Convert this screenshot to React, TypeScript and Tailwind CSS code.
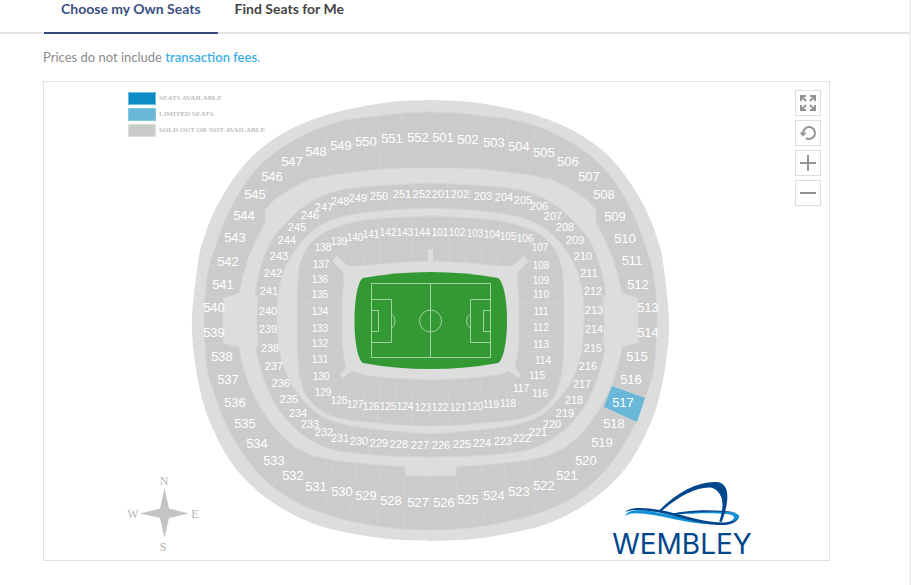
import React, { useState } from 'react';

type Point = [number, number];
type Label = [number, number, number];

const CENTER_X = 430.5;

// Left half of every ring, from top center down to bottom center
const STADIUM: Point[] = [
  [430, 100], [390, 102], [350, 109], [320, 117], [291, 129], [264, 146], [245, 164], [228, 187], [213, 214],
  [204, 238], [198, 262], [192, 320], [195, 362], [203, 402], [213, 429], [227, 456], [243, 477], [265, 497],
  [292, 514], [320, 526], [350, 533], [388, 539], [430, 541],
];

const UPPER_OUTER: Point[] = [
  [430, 112], [403, 113], [378, 116], [352, 119], [325, 126], [298, 138], [273, 154], [253, 173], [238, 195],
  [225, 220], [216, 245], [209, 267], [205, 293], [204, 320], [205, 347], [208, 373], [216, 398], [225, 422],
  [238, 446], [253, 467], [273, 487], [298, 503], [325, 514], [350, 521], [377, 526], [403, 529], [430, 530],
];

const UPPER_INNER: Point[] = [
  [430, 168], [403, 168], [380, 169], [355, 172], [332, 175], [310, 179], [292, 188], [275, 199], [265, 210],
  [265, 223], [257, 238], [249, 256], [243, 275], [239, 293], [223, 298], [223, 343], [239, 347], [242, 363],
  [249, 385], [260, 407], [273, 426], [283, 437], [295, 447], [313, 456], [333, 460], [357, 463], [380, 465],
  [405, 467], [405, 476], [430, 476],
];

const CLUB_OUTER: Point[] = [
  [430, 183], [390, 185], [353, 188], [327, 194], [303, 207], [287, 222], [273, 238], [264, 257], [258, 278],
  [255, 295], [258, 297], [257, 320], [258, 345], [256, 347], [260, 367], [267, 387], [273, 400], [285, 418],
  [303, 435], [327, 448], [353, 453], [390, 456], [430, 457],
];

const CLUB_INNER: Point[] = [
  [430, 208], [390, 210], [350, 215], [325, 223], [307, 236], [292, 255], [283, 273], [278, 297], [277, 320],
  [279, 349], [285, 371], [293, 387], [307, 404], [323, 417], [347, 425], [373, 429], [403, 432], [430, 434],
];

const LOWER_OUTER: Point[] = [
  [430, 216], [390, 218], [360, 221], [337, 227], [322, 234], [310, 244], [302, 258], [298, 277], [297, 320],
  [298, 363], [302, 384], [308, 398], [323, 412], [343, 419], [367, 422], [403, 425], [430, 426],
];

const LOWER_INNER: Point[] = [
  [428, 261], [390, 263], [360, 266], [348, 266], [337, 256], [332, 261], [343, 272], [344, 282], [342, 297],
  [342, 343], [344, 357], [346, 367], [340, 375], [343, 378], [352, 371], [363, 375], [390, 378], [430, 380],
];

// Section borders on the left half: x1, y1, x2, y2
const DIVIDERS: number[][] = [
  [430, 112, 430, 168], [403, 113, 403, 168], [378, 116, 380, 169], [352, 119, 355, 172], [325, 126, 332, 175],
  [298, 138, 310, 179], [273, 154, 292, 188], [253, 173, 275, 199], [238, 195, 264, 212], [225, 220, 257, 237],
  [216, 245, 249, 256], [209, 267, 243, 275], [205, 297, 223, 298], [204, 320, 223, 320], [205, 344, 223, 343],
  [208, 373, 242, 363], [216, 398, 249, 385], [225, 422, 260, 407], [238, 446, 272, 425], [253, 467, 283, 437],
  [273, 487, 295, 447], [298, 503, 313, 456], [325, 514, 333, 460], [350, 521, 357, 463], [377, 526, 380, 465],
  [403, 529, 405, 476], [430, 476, 430, 530],
  [413, 184, 413, 208], [391, 185, 391, 210], [367, 187, 369, 212], [348, 190, 352, 214], [327, 194, 335, 218],
  [310, 203, 320, 226], [296, 214, 309, 233], [281, 229, 298, 247], [271, 243, 290, 259], [263, 262, 284, 270],
  [258, 280, 280, 284], [257, 300, 278, 301], [257, 320, 277, 320], [258, 340, 278, 339], [259, 358, 281, 355],
  [264, 377, 287, 373], [271, 395, 296, 389], [281, 411, 305, 401], [294, 426, 313, 410], [313, 441, 326, 419],
  [332, 449, 341, 424], [350, 452, 354, 427], [368, 454, 371, 429], [389, 456, 391, 431], [409, 457, 410, 433],
  [430, 434, 430, 457],
  [412, 217, 412, 262], [395, 218, 395, 263], [378, 219, 380, 264], [361, 221, 364, 266], [343, 225, 352, 264],
  [325, 236, 337, 256], [302, 262, 332, 268], [298, 287, 343, 288], [297, 303, 342, 303], [297, 320, 342, 320],
  [297, 336, 342, 336], [298, 352, 343, 351], [299, 369, 344, 365], [311, 401, 340, 378], [330, 414, 351, 374],
  [346, 419, 360, 376], [362, 421, 366, 377], [378, 423, 381, 378], [395, 424, 396, 379], [412, 425, 413, 380],
  [430, 380, 430, 426],
];

const UPPER_LABELS: Label[] = [
  [501, 443, 137], [502, 468, 139], [503, 494, 142], [504, 519, 146], [505, 544, 152], [506, 568, 161],
  [507, 589, 176], [508, 604, 194], [509, 615, 216], [510, 625, 238], [511, 632, 260], [512, 638, 284],
  [513, 648, 307], [514, 648, 332], [515, 637, 356], [516, 631, 379], [517, 623, 402], [518, 614, 423],
  [519, 602, 442], [520, 586, 460], [521, 567, 475], [522, 544, 485], [523, 519, 491], [524, 494, 495],
  [525, 468, 499], [526, 444, 502], [527, 418, 502], [528, 391, 500], [529, 366, 495], [530, 342, 491],
  [531, 316, 486], [532, 293, 475], [533, 274, 460], [534, 257, 443], [535, 245, 423], [536, 235, 402],
  [537, 228, 379], [538, 222, 356], [539, 214, 332], [540, 214, 307], [541, 223, 284], [542, 228, 261],
  [543, 235, 237], [544, 244, 215], [545, 255, 194], [546, 272, 176], [547, 292, 161], [548, 316, 151],
  [549, 341, 145], [550, 366, 141], [551, 392, 138], [552, 418, 137],
];

const CLUB_LABELS: Label[] = [
  [201, 441, 194], [202, 460, 194], [203, 483, 196], [204, 504, 197], [205, 523, 200], [206, 539, 206],
  [207, 553, 216], [208, 565, 227], [209, 575, 240], [210, 583, 256], [211, 589, 273], [212, 593, 291],
  [213, 594, 310], [214, 594, 329], [215, 593, 348], [216, 588, 366], [217, 582, 384], [218, 574, 400],
  [219, 565, 413], [220, 552, 424], [221, 538, 432], [222, 522, 438], [223, 503, 441], [224, 482, 443],
  [225, 462, 444], [226, 441, 445], [227, 420, 445], [228, 399, 444], [229, 379, 443], [230, 359, 441],
  [231, 340, 438], [232, 324, 432], [233, 310, 424], [234, 298, 413], [235, 289, 399], [236, 281, 383],
  [237, 274, 366], [238, 270, 348], [239, 268, 329], [240, 268, 311], [241, 269, 291], [242, 273, 273],
  [243, 279, 256], [244, 287, 240], [245, 297, 227], [246, 310, 215], [247, 324, 207], [248, 340, 201],
  [249, 358, 198], [250, 379, 196], [251, 402, 194], [252, 422, 194],
];

const LOWER_LABELS: Label[] = [
  [101, 440, 232], [102, 457, 232], [103, 475, 233], [104, 492, 234], [105, 508, 236], [106, 525, 238],
  [107, 540, 247], [108, 541, 265], [109, 541, 280], [110, 541, 294], [111, 541, 311], [112, 541, 327],
  [113, 541, 344], [114, 543, 360], [115, 537, 375], [116, 540, 393], [117, 521, 388], [118, 508, 403],
  [119, 491, 404], [120, 475, 406], [121, 458, 407], [122, 440, 407], [123, 423, 407], [124, 405, 406],
  [125, 388, 406], [126, 371, 406], [127, 355, 404], [128, 339, 400], [129, 323, 392], [130, 321, 376],
  [131, 320, 359], [132, 320, 343], [133, 320, 328], [134, 320, 311], [135, 320, 294], [136, 320, 279],
  [137, 321, 264], [138, 323, 247], [139, 339, 241], [140, 355, 237], [141, 371, 234], [142, 388, 232],
  [143, 405, 232], [144, 422, 232],
];

const LEGEND = [
  { label: 'SEATS AVAILABLE', swatch: 'bg-[#0b8cc4] border-[#6dbbdc]' },
  { label: 'LIMITED SEATS', swatch: 'bg-[#69b8d9] border-[#85c6e0]' },
  { label: 'SOLD OUT OR NOT AVAILABLE', swatch: 'bg-[#cacaca] border-[#dcdcdc]' },
];

const mirror = (x: number) => 2 * CENTER_X - x;

const closeRing = (half: Point[]): Point[] => [
  ...half,
  ...half.map(([x, y]): Point => [mirror(x), y]).reverse(),
];

const toPoints = (half: Point[]) => closeRing(half).map((p) => p.join(',')).join(' ');

// Catmull-Rom through all points
const toSmoothPath = (half: Point[]) => {
  const pts = closeRing(half);
  const at = (i: number) => pts[(i + pts.length) % pts.length];
  const curves = pts.map((_, i) => {
    const [p0, p1, p2, p3] = [at(i - 1), at(i), at(i + 1), at(i + 2)];
    return `C${p1[0] + (p2[0] - p0[0]) / 6},${p1[1] + (p2[1] - p0[1]) / 6} ${p2[0] - (p3[0] - p1[0]) / 6},${
      p2[1] - (p3[1] - p1[1]) / 6
    } ${p2[0]},${p2[1]}`;
  });
  return `M${pts[0].join(',')}${curves.join('')}Z`;
};

const SectionLabels: React.FC<{ labels: Label[]; className: string; drop: number }> = ({ labels, className, drop }) => (
  <g className={className} fill="#fff" textAnchor="middle">
    {labels.map(([section, x, y]) => (
      <text key={section} x={x} y={y + drop}>
        {section}
      </text>
    ))}
  </g>
);

const Pitch: React.FC = () => (
  <g>
    <path
      d="M363 278Q395 272 430.500 272T498 278C503 281 507 298 507 320.500S503 360 498 363Q466 369 430.500 369T363 363C358 360 354.500 343 354.500 320.500S358 281 363 278Z"
      fill="#339933"
    />
    <g fill="none" stroke="#a3d0a3" strokeWidth="1">
      <rect x="371.500" y="283.500" width="119" height="74" />
      <path d="M430.500 283.500V357.500" />
      <circle cx="430.500" cy="321" r="11" />
      <path d="M371.500 299.500H391.500V342.500H371.500M371.500 310.500H378.500V331.500H371.500M391.500 314Q395 316 395 321T391.500 328" />
      <path d="M490.500 299.500H470.500V342.500H490.500M490.500 310.500H483.500V331.500H490.500M470.500 314Q466.500 316 466.500 321T470.500 328" />
    </g>
  </g>
);

const Compass: React.FC = () => (
  <g fill="#c4c4c4">
    <path d="M164.500 488L169 508.500L189 513.500L169 518L164.500 538L160 518L140 513.500L160 508.500Z" />
    <g className="font-[family-name:Liberation_Serif,serif] text-[12px]" fill="#b4b4b4" textAnchor="middle">
      <text x="164" y="485">N</text>
      <text x="133" y="518">W</text>
      <text x="195" y="518">E</text>
      <text x="163" y="551">S</text>
    </g>
  </g>
);

const WembleyLogo: React.FC = () => (
  <g>
    <g transform="translate(600 470) scale(.3333)">
      <path
        d="M76 138C84 116 122 120 160 125C225 135 290 158 352 161C290 168 230 147 165 136C120 129 92 126 76 138Z"
        fill="#1192d6"
      />
      <path
        d="M225 130C280 122 345 123 385 126C430 130 428 148 385 157C408 146 410 136 380 132C335 128 280 130 225 134Z"
        fill="#1192d6"
      />
      <path d="M215 131C265 120 345 116 412 128C345 122 270 126 215 135Z" fill="#00468c" />
      <path
        d="M75 126C92 109 135 113 180 120C240 132 300 153 350 157C382 159 402 154 417 143C409 158 388 167 352 165C290 161 235 140 175 127C130 119 98 116 75 126Z"
        fill="#00468c"
      />
      <path
        d="M173 126C228 68 290 34 350 36C392 39 388 95 365 157L358 154C374 106 372 68 336 53C295 48 235 78 182 126Z"
        fill="#00468c"
      />
    </g>
    <text
      x="682"
      y="554"
      className="font-[family-name:Inter,sans-serif] text-[28px]"
      fill="#00468c"
      textAnchor="middle"
    >
      WEMBLEY
    </text>
  </g>
);

const SeatMap: React.FC = () => (
  <svg viewBox="44 82 785 478" className="block w-full" role="img" aria-label="Wembley seating plan">
    <path d={toSmoothPath(STADIUM)} fill="#dddddd" />
    <g stroke="#d5d5d5" strokeWidth="1">
      <path d={toSmoothPath(UPPER_OUTER)} fill="#cbcbcb" />
      <polygon points={toPoints(UPPER_INNER)} fill="#dddddd" />
      <path d={toSmoothPath(CLUB_OUTER)} fill="#cbcbcb" />
      <path d={toSmoothPath(CLUB_INNER)} fill="#dddddd" />
      <path d={toSmoothPath(LOWER_OUTER)} fill="#cbcbcb" />
      <polygon points={toPoints(LOWER_INNER)} fill="#dddddd" />
    </g>
    <rect x="428" y="249" width="5" height="14" fill="#dddddd" />
    <g stroke="#d1d1d1" strokeWidth="1">
      {DIVIDERS.map(([x1, y1, x2, y2]) => (
        <React.Fragment key={`${x1}-${y1}`}>
          <line x1={x1} y1={y1} x2={x2} y2={y2} />
          {x1 < 430 && <line x1={mirror(x1)} y1={y1} x2={mirror(x2)} y2={y2} />}
        </React.Fragment>
      ))}
    </g>
    <polygon points="612,386 645,398 637,422 604,407" fill="#69b8d9" />
    <Pitch />
    <SectionLabels
      labels={UPPER_LABELS}
      drop={5}
      className="font-[family-name:Liberation_Sans,sans-serif] text-[13px]"
    />
    <SectionLabels
      labels={CLUB_LABELS}
      drop={4}
      className="font-[family-name:Liberation_Sans,sans-serif] text-[11px]"
    />
    <SectionLabels
      labels={LOWER_LABELS}
      drop={4}
      className="font-[family-name:Liberation_Sans,sans-serif] text-[10px]"
    />
    <Compass />
    <WembleyLogo />
  </svg>
);

const MapButton: React.FC<{ label: string; children: React.ReactNode }> = ({ label, children }) => (
  <button
    type="button"
    aria-label={label}
    className="flex size-[26px] items-center justify-center border border-[#dedede] bg-white text-[#929292]"
  >
    <svg viewBox="0 0 18 18" className="size-[18px]" fill="none" stroke="currentColor" strokeWidth="2">
      {children}
    </svg>
  </button>
);

const App: React.FC = () => {
  const [tab, setTab] = useState(0);

  return (
    <div className="min-h-screen border-r-2 border-[#eeeeee] bg-white font-[family-name:Lato,sans-serif]">
      {/* Tabs */}
      <nav className="border-b-2 border-[#e2e2e2] pl-11">
        <div className="-mb-[2px] flex">
          {['Choose my Own Seats', 'Find Seats for Me'].map((name, i) => (
            <button
              key={name}
              type="button"
              onClick={() => setTab(i)}
              className={`border-b-2 px-[17px] pb-[14px] text-[14px] leading-[18px] font-bold ${
                tab === i ? 'border-[#364b7c] text-[#3a5083]' : 'border-transparent text-[#444444]'
              }`}
            >
              {name}
            </button>
          ))}
        </div>
      </nav>

      <main className="pt-[13px] pr-[79px] pl-[43px]">
        <p className="text-[13px] leading-5 text-[#8c8c8c]">
          Prices do not include{' '}
          <a href="#fees" className="font-semibold text-[#3eaee6]">
            transaction fees
          </a>
          <span className="text-[#3eaee6]">.</span>
        </p>

        {/* Seat map */}
        <div className="relative mt-[14px] border border-[#e0e0e0]">
          <SeatMap />

          <ul className="absolute top-[10px] left-[84px] flex flex-col gap-[3px]">
            {LEGEND.map(({ label, swatch }) => (
              <li key={label} className="flex items-center gap-[3px]">
                <span className={`h-[13px] w-7 border ${swatch}`} />
                <span className="font-[family-name:Liberation_Serif,serif] text-[7px] leading-[13px] font-bold text-[#c0c0c0]">
                  {label}
                </span>
              </li>
            ))}
          </ul>

          <div className="absolute top-2 right-2 flex flex-col gap-1">
            <MapButton label="Full screen">
              <path d="M2 7V2H7M11 2H16V7M16 11V16H11M7 16H2V11M2 2L7 7M16 2L11 7M16 16L11 11M2 16L7 11" />
            </MapButton>
            <MapButton label="Reset">
              <path d="M4 10V9A6 6 0 1 1 7 14.200" />
              <path d="M0.500 8.500H7.500L4 12.500Z" fill="currentColor" stroke="none" />
            </MapButton>
            <MapButton label="Zoom in">
              <path d="M9 1V17M1 9H17" />
            </MapButton>
            <MapButton label="Zoom out">
              <path d="M1 9H17" />
            </MapButton>
          </div>
        </div>
      </main>
    </div>
  );
};

export default App;
